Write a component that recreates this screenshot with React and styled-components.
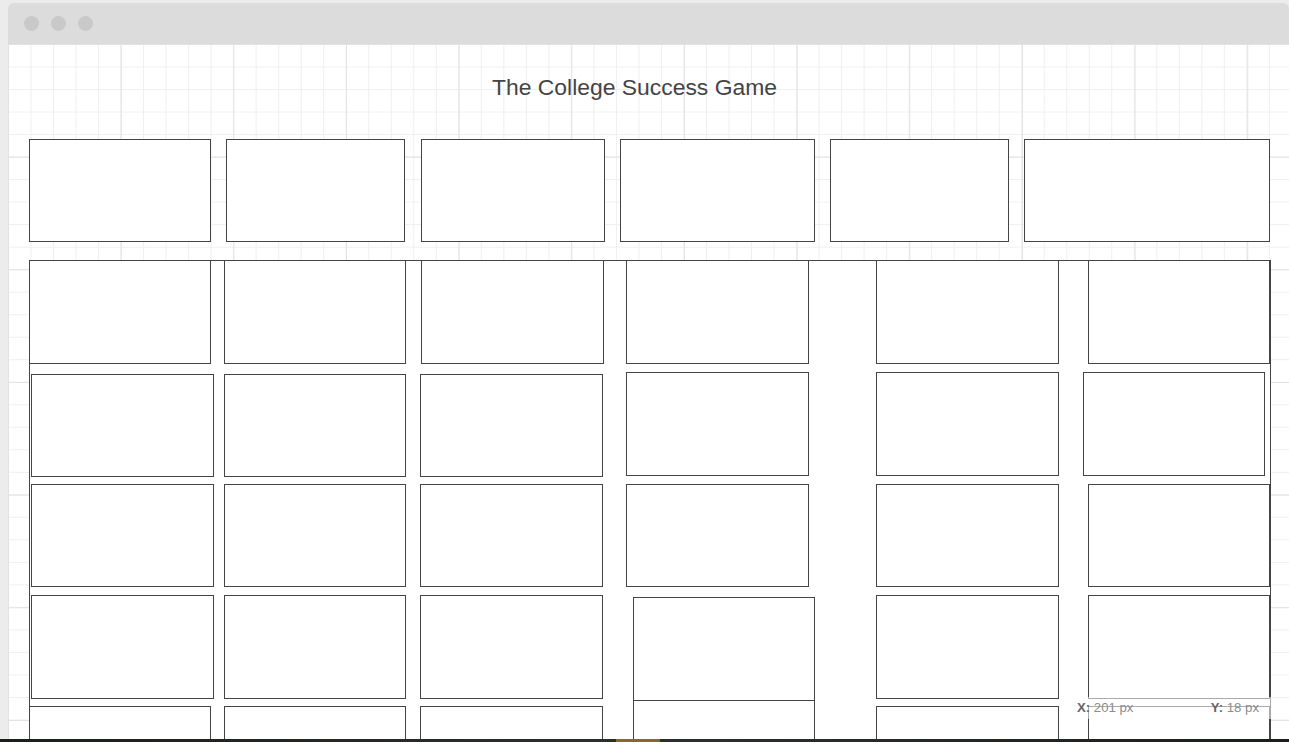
import styled, { createGlobalStyle } from "styled-components";

const GlobalStyle = createGlobalStyle`
    html, body {
        margin: 0;
        padding: 0;
        background: #ececec;
        font-family: "Liberation Sans", Arial, sans-serif;
        overflow: hidden;
    }
`;

// canvas origin in page pixels
const OX = 8;
const OY = 44;

const Screen = styled.div`
    width: 1289px;
    height: 742px;
    display: flex;
    flex-direction: column;
    background: #ececec;
`;

const Window = styled.div`
    flex: 1;
    margin: 3px 0 0 8px;
    display: flex;
    flex-direction: column;
    border-radius: 6px 6px 0 0;
    overflow: hidden;
    min-height: 0;
`;

const TitleBar = styled.div`
    height: 41px;
    flex-shrink: 0;
    background: #dcdcdc;
    display: flex;
    align-items: center;
    gap: 12px;
    padding-left: 16px;
`;

const Dot = styled.span`
    width: 15px;
    height: 15px;
    border-radius: 50%;
    background: #c9c9c9;
`;

const Canvas = styled.div`
    position: relative;
    flex: 1;
    overflow: hidden;
    background-color: #fff;
    background-image:
        linear-gradient(to right, #e2e2e2 1px, transparent 1px),
        linear-gradient(to bottom, #e2e2e2 1px, transparent 1px),
        linear-gradient(to right, #efefef 1px, transparent 1px),
        linear-gradient(to bottom, #efefef 1px, transparent 1px);
    background-size:
        112.67px 112.67px,
        112.67px 112.67px,
        22.53px 22.53px,
        22.53px 22.53px;
`;

const Heading = styled.div`
    position: absolute;
    left: ${492 - OX}px;
    top: ${76 - OY}px;
    font-size: 22.9px;
    line-height: 1;
    color: #444;
    white-space: nowrap;
`;

// a rectangle shape on the mockup canvas, given by its page-pixel edges
const Shape = styled.div`
    position: absolute;
    box-sizing: border-box;
    left: ${(p) => p.$l - OX}px;
    top: ${(p) => p.$t - OY}px;
    width: ${(p) => p.$r - p.$l + 1}px;
    height: ${(p) => p.$b - p.$t + 1}px;
    border: 1px solid #444;
    background: #fff;
`;

const Container = styled(Shape)`
    border-bottom: none;
`;

const Tooltip = styled.div`
    position: absolute;
    left: ${1068 - OX}px;
    top: ${697 - OY}px;
    width: 204px;
    height: 22px;
    box-sizing: border-box;
    padding: 0 13px 0 9px;
    display: flex;
    justify-content: space-between;
    align-items: center;
    background: rgba(255, 255, 255, 0.55);
    font-size: 13.2px;
    line-height: 22px;
    color: #8c8c8c;
`;

const Label = styled.b`
    color: #666;
`;

const TaskStrip = styled.div`
    height: 3px;
    flex-shrink: 0;
    display: flex;
    background: linear-gradient(to right, #1b2016, #2a3225 50%, #1b2016);
`;

const TaskItem = styled.span`
    margin-left: 616px;
    width: 44px;
    background: #9c6310;
`;

const header = [
    [29, 139, 210, 241],
    [226, 139, 404, 241],
    [421, 139, 604, 241],
    [620, 139, 814, 241],
    [830, 139, 1008, 241],
    [1024, 139, 1269, 241],
];

const cells = [
    // row 1
    [29, 260, 210, 363],
    [224, 260, 405, 363],
    [421, 260, 603, 363],
    [626, 260, 808, 363],
    [876, 260, 1058, 363],
    [1088, 260, 1269, 363],
    // row 2
    [31, 374, 213, 476],
    [224, 374, 405, 476],
    [420, 374, 602, 476],
    [626, 372, 808, 475],
    [876, 372, 1058, 475],
    [1083, 372, 1264, 475],
    // row 3
    [31, 484, 213, 586],
    [224, 484, 405, 586],
    [420, 484, 602, 586],
    [626, 484, 808, 586],
    [876, 484, 1058, 586],
    [1088, 484, 1269, 586],
    // row 4
    [31, 595, 213, 698],
    [224, 595, 405, 698],
    [420, 595, 602, 698],
    [633, 597, 814, 700],
    [876, 595, 1058, 698],
    [1088, 595, 1269, 698],
    // row 5
    [29, 706, 210, 809],
    [224, 706, 405, 809],
    [420, 706, 602, 809],
    [633, 700, 814, 803],
    [876, 706, 1058, 809],
    [1088, 706, 1269, 809],
];

const App = () => {
    return (
        <Screen>
            <GlobalStyle />
            <Window>
                <TitleBar>
                    <Dot />
                    <Dot />
                    <Dot />
                </TitleBar>
                <Canvas>
                    <Heading>The College Success Game</Heading>
                    {header.map(([l, t, r, b], i) => (
                        <Shape key={"h" + i} $l={l} $t={t} $r={r} $b={b} />
                    ))}
                    <Container $l={29} $t={260} $r={1270} $b={900} />
                    {cells.map(([l, t, r, b], i) => (
                        <Shape key={"c" + i} $l={l} $t={t} $r={r} $b={b} />
                    ))}
                    <Tooltip>
                        <span>
                            <Label>X:</Label> 201 px
                        </span>
                        <span>
                            <Label>Y:</Label> 18 px
                        </span>
                    </Tooltip>
                </Canvas>
            </Window>
            <TaskStrip>
                <TaskItem />
            </TaskStrip>
        </Screen>
    );
};

export default App;
